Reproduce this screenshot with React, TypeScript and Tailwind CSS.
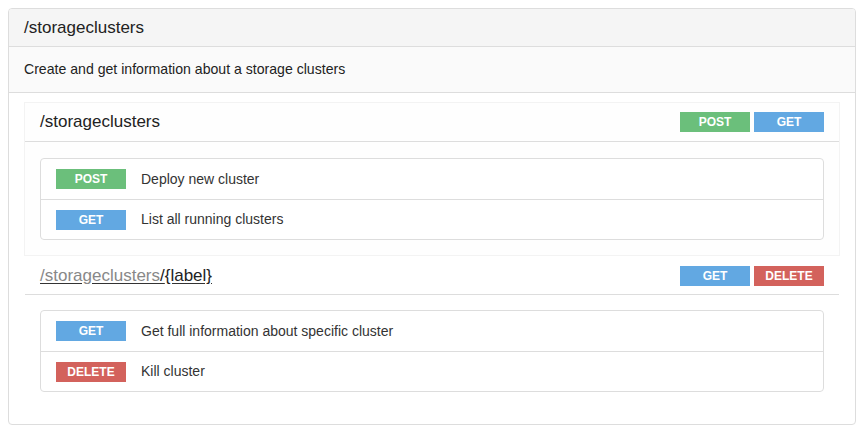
import React from "react";

function Badge({ m }: { m: string }) {
  return (
    <span
      className={`${m === "POST" ? "bg-[#6bbf7b]" : m === "GET" ? "bg-[#62a8e2]" : "bg-[#d3625c]"} inline-flex h-[20px] w-[70px] shrink-0 items-center justify-center text-[12px] font-bold leading-none text-white`}
    >
      {m}
    </span>
  );
}

function Row({ m, text, first }: { m: string; text: string; first?: boolean }) {
  return (
    <div className={`flex h-[40px] items-center gap-[15px] px-[15px] ${first ? "" : "border-t border-[#ddd]"}`}>
      <Badge m={m} />
      <span className="text-[14px] text-[#333]">{text}</span>
    </div>
  );
}

export default function App() {
  return (
    <div className="p-2 font-['Liberation_Sans',Arial,sans-serif] text-[#333]">
      <div className="w-[848px] h-[417px] rounded-[4px] border border-[#ddd] bg-white overflow-hidden">
        <div className="flex h-[38px] items-center border-b border-[#ddd] bg-[#f5f5f5] px-[15px]">
          <span className="text-[17px] text-[#222]">/storageclusters</span>
        </div>
        <div className="flex h-[46px] items-center border-b border-[#ddd] bg-[#fafafa] px-[15px]">
          <span className="text-[14.1px] text-[#222]">Create and get information about a storage clusters</span>
        </div>
        <div className="px-[15px] pt-[9px]">
          <div className="border border-[#f3f3f3] bg-[#fefefe]">
            <div className="flex h-[39px] items-center justify-between border-b border-[#ddd] px-[15px]">
              <span className="text-[17px] text-[#222]">/storageclusters</span>
              <div className="flex gap-[4px]">
                <Badge m="POST" />
                <Badge m="GET" />
              </div>
            </div>
            <div className="mx-[15px] mt-[16px] mb-[15px] rounded-[4px] border border-[#ddd] bg-white">
              <Row m="POST" text="Deploy new cluster" first />
              <Row m="GET" text="List all running clusters" />
            </div>
          </div>
          <div className="border border-transparent">
            <div className="flex h-[38px] items-center justify-between border-b border-[#ddd] px-[15px]">
              <span className="text-[17px] underline decoration-[#333] underline-offset-2">
                <span className="text-[#888]">/storageclusters</span>
                <span className="text-[#222]">/{"{label}"}</span>
              </span>
              <div className="flex gap-[4px]">
                <Badge m="GET" />
                <Badge m="DELETE" />
              </div>
            </div>
            <div className="mx-[15px] mt-[15px] mb-[15px] rounded-[4px] border border-[#ddd] bg-white">
              <Row m="GET" text="Get full information about specific cluster" first />
              <Row m="DELETE" text="Kill cluster" />
            </div>
          </div>
        </div>
      </div>
    </div>
  );
}
